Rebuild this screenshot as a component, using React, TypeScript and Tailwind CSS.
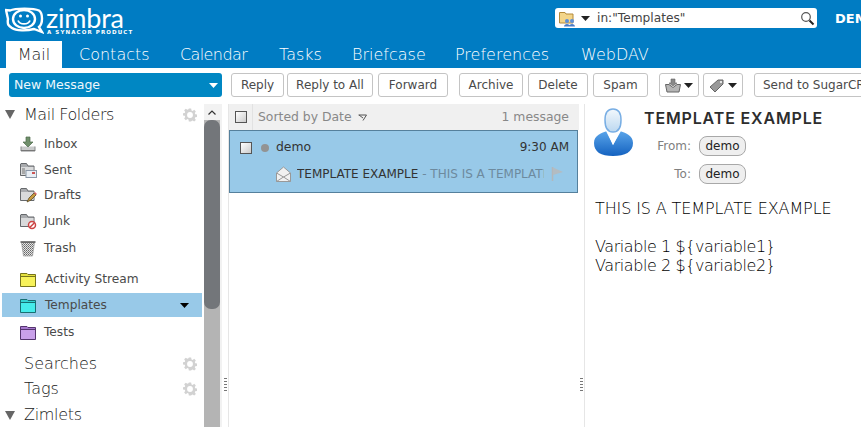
import React from "react";

const Caret = ({ c = "#333", className = "" }: { c?: string; className?: string }) => (
  <svg width="9" height="5" viewBox="0 0 9 5" className={className}><path d="M0 0h9L4.500 5z" fill={c} /></svg>
);

const Gear = () => (
  <svg width="14" height="14" viewBox="0 0 24 24" className="shrink-0">
    <path fill="#d2d2d2" fillRule="evenodd" d="M10 1h4l.6 3.200 1.900.8 2.700-1.800 2.800 2.800-1.800 2.700.8 1.900 3.200.6v4l-3.200.6-.8 1.900 1.800 2.700-2.800 2.800-2.700-1.800-1.900.8L14 23h-4l-.6-3.200-1.900-.8-2.700 1.800L2 18l1.800-2.700-.8-1.900L-.2 12.800V9.200L3 8.600l.8-1.900L2 4 4.800 1.200 7.500 3l1.900-.8zM12 7a5 5 0 1 0 0 10 5 5 0 0 0 0-10z" />
  </svg>
);

const GrayFolder = ({ children }: { children?: React.ReactNode }) => (
  <svg width="17" height="18" viewBox="0 0 17 18">
    <path d="M.5 3V14.500H14V5H8L6.500 2.500H1z" fill="#a9abae" stroke="#66696c" />
    <rect x="1" y="6" width="12.500" height="8" fill="#d9dadb" />
    {children}
  </svg>
);

const ColorFolder = ({ a, b, d }: { a: string; b: string; d: string }) => (
  <svg width="17" height="15" viewBox="0 0 17 15">
    <path d="M.5 1.500H7L8 2.500H15.500V14.500H.5z" fill={b} stroke={d} />
    <path d="M1 5H15V14H1z" fill={a} />
    <path d="M1 4.500H15" stroke={d} />
  </svg>
);

const icons: Record<string, React.ReactNode> = {
  Inbox: (
    <svg width="16" height="17" viewBox="0 0 16 17">
      <path d="M1 10.500V15H15V10.500" fill="#c9cbcb" stroke="#85888a" />
      <path d="M1 14.500H15" stroke="#777" />
      <path d="M6 1H10V6H13L8 11 3 6H6z" fill="#6f8f6b" stroke="#4e6a4c" strokeWidth=".7" />
    </svg>
  ),
  Sent: (
    <GrayFolder>
      <rect x="6" y="9.500" width="10.500" height="7" fill="#e8eef5" stroke="#8a97a8" />
      <path d="M2 8h3M2 10h3M2 12h3" stroke="#777" />
      <path d="M12 11h3v2h-3z" fill="#c55" />
    </GrayFolder>
  ),
  Drafts: (
    <GrayFolder>
      <path d="M7 16 9 12 14 7l2 2-5 5z" fill="#c79a3f" stroke="#5a4a25" strokeWidth=".8" />
      <path d="M14 7l2 2 1-1-2-2z" fill="#d66" />
    </GrayFolder>
  ),
  Junk: (
    <GrayFolder>
      <circle cx="12" cy="13" r="3.500" fill="#fff" stroke="#c44" strokeWidth="1.500" />
      <path d="M9.700 15.500 14.500 10.700" stroke="#c44" strokeWidth="1.500" />
    </GrayFolder>
  ),
  Trash: (
    <svg width="16" height="17" viewBox="0 0 16 17">
      <defs>
        <pattern id="mesh" width="2" height="2" patternUnits="userSpaceOnUse">
          <rect width="2" height="2" fill="#e4e4e4" />
          <rect width="1" height="1" fill="#666" />
          <rect x="1" y="1" width="1" height="1" fill="#888" />
        </pattern>
      </defs>
      <path d="M1.500 2.500H14.500L12.500 16H3.500z" fill="url(#mesh)" stroke="#999" strokeWidth=".7" />
      <path d="M0.500 2H15.500" stroke="#555" strokeWidth="1.500" />
    </svg>
  ),
  "Activity Stream": <ColorFolder a="#f7f25a" b="#e4e03d" d="#77751c" />,
  Templates: <ColorFolder a="#45ecea" b="#34d3d2" d="#176f72" />,
  Tests: <ColorFolder a="#c9a0ea" b="#a678ce" d="#55356f" />,
};

const Folder = ({ name, selected, mt = 0, x = 44 }: { name: string; selected?: boolean; mt?: number; x?: number }) => (
  <div
    className={`flex items-center h-[24px] pl-[17px] ${selected ? "bg-[#98c9e8]" : ""}`}
    style={{ marginTop: mt }}
  >
    <div className="w-[18px] flex items-center justify-center shrink-0">{icons[name]}</div>
    <span className="text-[12.2px] leading-none text-[#4a4a4a]" style={{ marginLeft: x - 37 }}>{name}</span>
    {selected && <Caret c="#000" className="ml-auto mr-[13px] mt-[1px]" />}
  </div>
);

const Btn = ({ children, w, ml = 3 }: { children: React.ReactNode; w: number; ml?: number }) => (
  <div
    className="h-[24px] shrink-0 flex items-center justify-center gap-[3px] rounded-[3px] border border-[#c4c4c4] bg-white text-[12px] text-[#4a4a4a] whitespace-nowrap"
    style={{ width: w, marginLeft: ml }}
  >
    {children}
  </div>
);

const Section = ({ label, tri, gear, mt = 0, h = 26, className = "" }: { label: string; tri?: boolean; gear?: boolean; mt?: number; h?: number; className?: string }) => (
  <div className="flex items-center pl-[3px] pr-[5px]" style={{ marginTop: mt, height: h }}>
    <div className="w-[19px] shrink-0">
      {tri && <svg width="10" height="9" viewBox="0 0 10 9"><path d="M0 0h10L5 9z" fill="#666" /></svg>}
    </div>
    <span className={`text-[16px] font-extralight text-[#222] ${className}`}>{label}</span>
    <div className="ml-auto">{gear && <Gear />}</div>
  </div>
);

const Pill = () => (
  <span className="inline-flex items-center justify-center w-[47px] h-[20px] rounded-[8px] border border-[#a8a8a8] bg-[#efefef] text-[12px] text-[#222]">demo</span>
);

const Check = () => (
  <div className="w-[12px] h-[12px] border border-[#555] bg-gradient-to-br from-white to-[#ccc] shrink-0" />
);

const Grip = () => (
  <div className="w-[3px] h-[13px] bg-[repeating-linear-gradient(to_bottom,#777_0,#777_1px,transparent_1px,transparent_3px)]" />
);

export default function App() {
  return (
    <div className="w-[861px] h-[427px] overflow-hidden flex flex-col bg-white font-['DejaVu_Sans',sans-serif]">
      <header className="h-[41px] shrink-0 bg-[#007cc3] flex items-start overflow-hidden">
        <div className="w-[555px] shrink-0 flex items-start pl-[5px] pt-[7px] text-white">
          <svg width="39" height="27" viewBox="0 0 39 27" className="shrink-0">
            <path d="M5 3.500C10 1 29 1 34 3.500 38 6 38 17 34 20L37 25 29 22C22 24 11 24 7 21 4 19 2 18 3 12L1 3z" fill="none" stroke="#fff" strokeWidth="2.400" />
            <ellipse cx="19" cy="12" rx="11" ry="9" fill="none" stroke="#fff" strokeWidth="2.400" />
            <circle cx="15.500" cy="9" r="1.500" fill="#fff" />
            <circle cx="22.500" cy="9" r="1.500" fill="#fff" />
            <path d="M13 13.500C15 18 23 18 25 13.500" fill="none" stroke="#fff" strokeWidth="1.800" />
          </svg>
          <div className="ml-[2px] flex flex-col">
            <span className="font-['Lato',sans-serif] font-normal text-[27px] leading-[21px] tracking-[-0.2px]">zimbra</span>
            <span className="text-[5.500px] leading-[6px] mt-[1px] ml-[1px] font-bold tracking-[1.1px] whitespace-nowrap">A SYNACOR PRODUCT</span>
          </div>
        </div>
        <div className="mt-[8px] w-[262px] h-[20px] shrink-0 rounded-[3px] bg-white flex items-center pl-[4px] pr-[2px]">
          <svg width="17" height="17" viewBox="0 0 17 17" className="shrink-0">
            <path d="M.5 2.500H6L7 4H14V13H.5z" fill="#f3d58a" stroke="#b48a3a" />
            <circle cx="8" cy="11" r="2" fill="#5d8fd8" />
            <circle cx="13" cy="11" r="2" fill="#5d8fd8" />
            <path d="M5 16.500C5 13 11 13 11 16.500zM10 16.500C10 13 16 13 16 16.500z" fill="#4a7cc8" />
          </svg>
          <Caret c="#222" className="ml-[5px] shrink-0" />
          <span className="ml-[7px] text-[12.2px] text-[#444]">in:"Templates"</span>
          <svg width="15" height="15" viewBox="0 0 15 15" className="ml-auto shrink-0">
            <circle cx="6" cy="6" r="4.300" fill="none" stroke="#555" strokeWidth="1.200" />
            <path d="M9.500 9.500 13.500 13.500" stroke="#222" strokeWidth="2" />
          </svg>
        </div>
        <span className="ml-[18px] mt-[9px] text-[13px] font-bold text-white">DEMO</span>
      </header>

      <nav className="h-[27px] shrink-0 bg-[#007cc3] flex items-stretch pl-[6px] text-[16px] font-extralight text-white whitespace-nowrap">
        <div className="w-[56px] bg-white text-[#222] flex items-center justify-center mr-[17px]">Mail</div>
        <div className="w-[101px] flex items-center">Contacts</div>
        <div className="w-[99px] flex items-center tracking-[-0.6px]">Calendar</div>
        <div className="w-[73px] flex items-center">Tasks</div>
        <div className="w-[103px] flex items-center">Briefcase</div>
        <div className="w-[126px] flex items-center">Preferences</div>
        <div className="flex items-center">WebDAV</div>
      </nav>

      <div className="h-[36px] shrink-0 flex items-start pt-[5px] pl-[9px] overflow-hidden">
        <div className="w-[213px] h-[24px] shrink-0 rounded-[3px] bg-[#0087c3] text-[#eef7fc] text-[12.5px] flex items-center pl-[5px] pr-[4px]">
          New Message
          <Caret c="#fff" className="ml-auto" />
        </div>
        <Btn w={53} ml={9}>Reply</Btn>
        <Btn w={86}>Reply to All</Btn>
        <Btn w={70} ml={5}>Forward</Btn>
        <Btn w={64} ml={11}>Archive</Btn>
        <Btn w={60} ml={5}>Delete</Btn>
        <Btn w={55} ml={5}>Spam</Btn>
        <Btn w={40} ml={11}>
          <svg width="16" height="15" viewBox="0 0 16 15">
            <path d="M6 1h4v4h2L8 8 4 5h2z" fill="#888" stroke="#666" strokeWidth=".6" />
            <path d="M.5 6.500H4l4 3 4-3h3.500L14 14H2z" fill="#b5b5b5" stroke="#666" />
          </svg>
          <Caret c="#222" />
        </Btn>
        <Btn w={40} ml={4}>
          <svg width="16" height="15" viewBox="0 0 16 15">
            <path d="M1 9 9 2h5v4L6 14z" fill="#999" stroke="#666" />
            <circle cx="12" cy="4" r="1" fill="#fff" />
          </svg>
          <Caret c="#222" />
        </Btn>
        <Btn w={130} ml={11}>Send to SugarCRM</Btn>
      </div>

      <main className="flex-1 min-h-0 flex items-stretch">
        <aside className="w-[202px] shrink-0 pl-[2px] flex flex-col">
          <Section label="Mail Folders" tri gear h={21} className="tracking-[-0.45px]" />
          <div className="mt-[7px]">
            <Folder name="Inbox" />
            <Folder name="Sent" mt={2} />
            <Folder name="Drafts" mt={1} />
            <Folder name="Junk" mt={2} />
            <Folder name="Trash" mt={3} />
            <Folder name="Activity Stream" mt={7} x={45} />
            <Folder name="Templates" selected mt={2} x={45} />
            <Folder name="Tests" mt={3} />
          </div>
          <Section label="Searches" gear mt={8} />
          <Section label="Tags" gear mt={1} />
          <Section label="Zimlets" tri mt={2} className="tracking-[-0.3px]" />
        </aside>

        <div className="w-[16px] shrink-0 ml-[2px] bg-[#f2f2f2] flex flex-col">
          <div className="h-[16px] flex items-center justify-center">
            <svg width="8" height="5" viewBox="0 0 8 5"><path d="M.5 4.500 4 1l3.500 3.500" fill="none" stroke="#333" strokeWidth="1.200" /></svg>
          </div>
          <div className="flex-1 bg-[#b4b4b4] flex flex-col">
            <div className="h-[189px] bg-[#73767a] rounded-[7px]" />
          </div>
        </div>

        <div className="w-[8px] shrink-0 border-l-2 border-[#f2f2f2] flex items-end justify-center pb-[36px]">
          <Grip />
        </div>

        <section className="w-[351px] shrink-0 flex flex-col border-l border-[#e6e6e6]">
          <div className="h-[26px] shrink-0 bg-[#f0f0f0] flex items-center text-[12.4px] text-[#888] pr-[10px]">
            <div className="w-[24px] h-full flex items-center justify-center border-r border-[#e2e2e2] shrink-0 pl-[1px]"><Check /></div>
            <span className="ml-[5px]">Sorted by Date</span>
            <svg width="9" height="7" viewBox="0 0 9 7" className="ml-[6px]"><path d="M.5 1H8.500L5 6.500M1 1l4 3" fill="none" stroke="#555" /></svg>
            <span className="ml-auto">1 message</span>
          </div>
          <div className="h-[63px] shrink-0 bg-[#98c9e8] border border-[#55809c] flex flex-col mr-[1px]">
            <div className="h-[33px] flex items-center pl-[10px] pr-[8px] text-[12.4px] text-[#333]">
              <Check />
              <span className="ml-[9px] w-[8px] h-[8px] rounded-full bg-[#939393] shrink-0" />
              <span className="ml-[7px]">demo</span>
              <span className="ml-auto text-[12px] -mt-[2px]">9:30 AM</span>
            </div>
            <div className="h-[23px] -mt-[2px] flex items-center pl-[46px] text-[12px] whitespace-nowrap">
              <svg width="15" height="16" viewBox="0 0 15 16" className="shrink-0">
                <path d="M.5 7 7.500 1l7 6v8.500H.5z" fill="#f1f1f1" stroke="#999" />
                <path d="M.5 7 7.500 11l7-4M.5 15.500 7.500 11l7 4.500" fill="none" stroke="#999" />
              </svg>
              <div className="ml-[6px] w-[247px] overflow-hidden">
                <span className="text-[#333]">TEMPLATE EXAMPLE</span>
                <span className="text-[#6d8a9e]"> - THIS IS A TEMPLATE EXAMPLE</span>
              </div>
              <svg width="13" height="15" viewBox="0 0 13 15" className="ml-[7px] shrink-0">
                <path d="M1.500 1v14" stroke="#b3b7ba" strokeWidth="1.500" />
                <path d="M2 1.500 12 6 2 9z" fill="#b3bcc2" />
              </svg>
            </div>
          </div>
        </section>

        <div className="w-[5px] shrink-0 flex items-end justify-center pb-[36px]">
          <Grip />
        </div>

        <section className="flex-1 min-w-0 border-l border-[#e6e6e6] pl-[9px] pt-[3px] overflow-hidden">
          <div className="flex items-start">
            <svg width="41" height="50" viewBox="0 0 41 50" className="shrink-0 -ml-[1px]">
              <defs>
                <linearGradient id="face" x1="0" y1="0" x2="0" y2="1"><stop offset="0" stopColor="#f3f8fc" /><stop offset="1" stopColor="#bcd8f0" /></linearGradient>
                <linearGradient id="suit" x1="0" y1="0" x2="0" y2="1"><stop offset="0" stopColor="#5aa5ea" /><stop offset="1" stopColor="#1462c0" /></linearGradient>
              </defs>
              <path d="M1 36C1 28 9 26 14 24L20 38 27 24C32 26 40 28 40 36 40 45 32 49 20 49 8 49 1 45 1 36z" fill="url(#suit)" />
              <path d="M13 24 20 38 28 24 25 23 20 32 16 23z" fill="#fff" />
              <path d="M20 2C13 2 12 8 12 13 12 19 14 25 20 25S28 19 28 13C28 8 27 2 20 2z" fill="url(#face)" stroke="#78aee4" strokeWidth="1.500" />
            </svg>
            <div className="ml-[11px] flex flex-col">
              <div className="font-['Inter',sans-serif] text-[16px] font-semibold leading-[20px] mt-[1px] -ml-[1px] text-[#2d2d2d] whitespace-nowrap tracking-[0.85px]">TEMPLATE EXAMPLE</div>
              <div className="flex items-center mt-[8px] text-[12px] text-[#808080]">
                <span className="w-[46px] text-right">From:</span>
                <span className="ml-[8px]"><Pill /></span>
              </div>
              <div className="flex items-center mt-[8px] text-[12px] text-[#808080]">
                <span className="w-[46px] text-right">To:</span>
                <span className="ml-[8px]"><Pill /></span>
              </div>
            </div>
          </div>
          <div className="mt-[15px] ml-[1px] text-[16px] font-extralight leading-[19px] text-black whitespace-nowrap">
            <div className="tracking-[-0.12px]">THIS IS A TEMPLATE EXAMPLE</div>
            <div className="h-[19px]" />
            <div className="tracking-[-0.43px]">Variable 1 {"${variable1}"}</div>
            <div className="tracking-[-0.43px]">Variable 2 {"${variable2}"}</div>
          </div>
        </section>
      </main>
    </div>
  );
}
